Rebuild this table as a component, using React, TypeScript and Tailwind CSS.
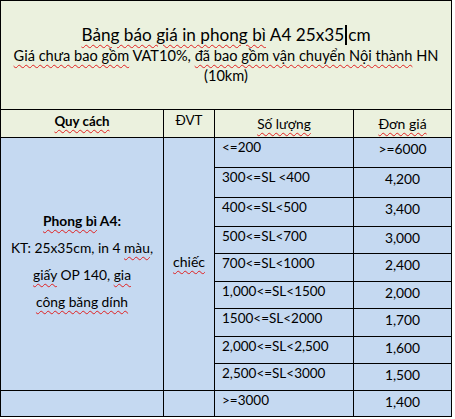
import React from "react";

const U = ({ children }: { children: React.ReactNode }) => (
  <span className="underline decoration-wavy decoration-[#e02020] decoration-1 underline-offset-[3px]">
    {children}
  </span>
);

const rows: [string, string][] = [
  ["<=200", ">=6000"],
  ["300<=SL <400", "4,200"],
  ["400<=SL<500", "3,400"],
  ["500<=SL<700", "3,000"],
  ["700<=SL<1000", "2,400"],
  ["1,000<=SL<1500", "2,000"],
  ["1500<=SL<2000", "1,700"],
  ["2,000<=SL<2,500", "1,600"],
  ["2,500<=SL<3000", "1,500"],
];

export default function App() {
  return (
    <div className="w-[455px] h-[419px] bg-white" style={{ fontFamily: "Lato, 'Noto Sans', sans-serif" }}>
      <div className="w-[452px] bg-black p-[1px] grid gap-[1px] grid-cols-[162px_50px_138px_97px] grid-rows-[108px_27px_29px_29px_28px_26px_27px_26px_27px_26px_26px_25px] text-black">
        {/* Title */}
        <div className="col-span-4 bg-[#ebf1de] flex flex-col items-center justify-center pb-[1px]">
          <div className="text-[17.2px] leading-[22px] flex items-center">
            <U>Bảng báo giá in phong bì</U>
            <span>&nbsp;A4 25x35</span>
            <span className="inline-block w-[2px] h-[20px] bg-black mx-[1px]" />
            <span>cm</span>
          </div>
          <div className="text-[14.6px] leading-[20px] text-center px-1">
            <U>Giá chưa bao gồm</U> VAT10%, <U>đã bao gồm vận chuyển Nội thành</U> HN
            <br />
            (10km)
          </div>
        </div>

        {/* Header */}
        <div className="bg-[#ebf1de] flex justify-center pt-[1px] text-[13.3px] font-bold leading-[20px]">
          <U>Quy cách</U>
        </div>
        <div className="bg-[#ebf1de] flex justify-center pt-[0px] text-[13.4px] leading-[20px]">ĐVT</div>
        <div className="bg-[#ebf1de] flex justify-center pt-[4px] text-[13.7px] leading-[20px]">
          <U>Số lượng</U>
        </div>
        <div className="bg-[#ebf1de] flex justify-center pt-[4px] text-[14px] leading-[20px]">
          <U>Đơn giá</U>
        </div>

        {/* Merged left cells */}
        <div className="row-span-9 bg-[#c5d9f1] flex flex-col items-center justify-center text-[13.8px] leading-[27px] text-center pb-[6px]">
          <div className="font-bold">
            <U>Phong bì</U> A4:
          </div>
          <div>
            KT: 25x35cm, in 4 <U>màu</U>,
          </div>
          <div>
            <U>giấy</U> OP 140, <U>gia</U>
          </div>
          <div>
            <U>công băng dính</U>
          </div>
        </div>
        <div className="row-span-9 bg-[#c5d9f1] flex items-center justify-center text-[14px] pb-[6px]">
          <U>chiếc</U>
        </div>

        {rows.map(([q, p], i) => (
          <React.Fragment key={i}>
            <div className="bg-[#c5d9f1] pl-[7px] pt-[0px] text-[13.5px] leading-[18px]">{q}</div>
            <div className="bg-[#c5d9f1] text-center pt-[2px] text-[13.8px] leading-[18px]">{p}</div>
          </React.Fragment>
        ))}

        {/* Last row */}
        <div className="bg-[#c5d9f1]" />
        <div className="bg-[#c5d9f1]" />
        <div className="bg-[#c5d9f1] pl-[7px] pt-[0px] text-[13.5px] leading-[18px]">&gt;=3000</div>
        <div className="bg-[#c5d9f1] text-center pt-[2px] text-[13.8px] leading-[18px]">1,400</div>
      </div>
    </div>
  );
}
